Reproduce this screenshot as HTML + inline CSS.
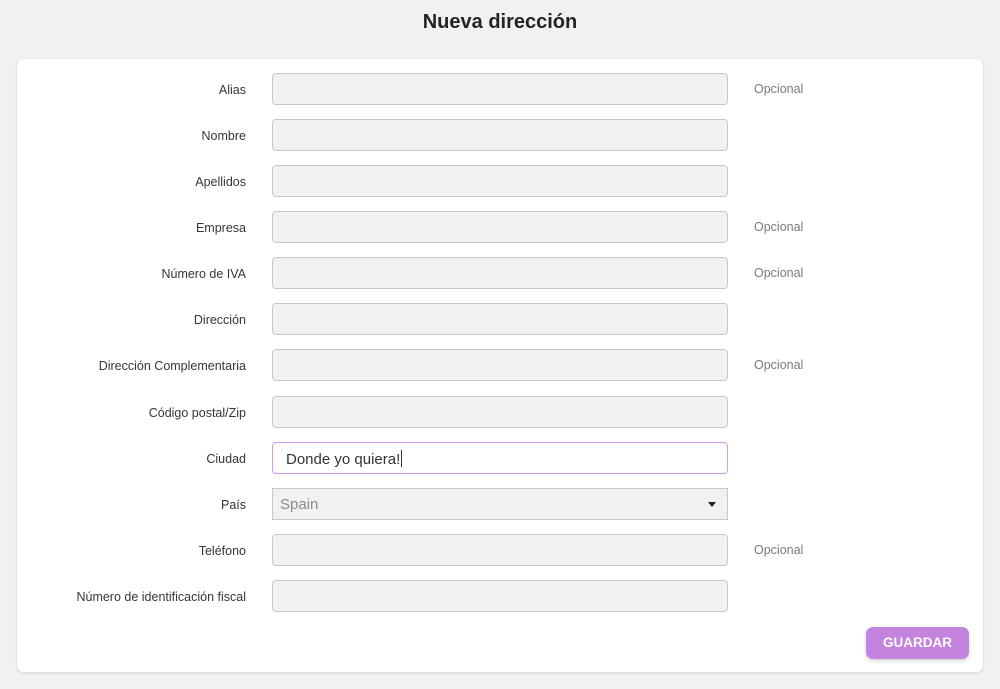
<!DOCTYPE html>
<html><head><meta charset="utf-8"><style>
*{box-sizing:border-box;margin:0;padding:0}
body{width:1000px;height:689px;background:#f1f1f1;font-family:"Liberation Sans","DejaVu Sans",sans-serif;color:#333;position:relative;overflow:hidden}
h1{position:absolute;top:11px;left:0;width:1000px;text-align:center;font-size:20px;font-weight:bold;color:#232323}
.card{position:absolute;left:17px;top:59px;width:966px;height:613px;background:#fff;border-radius:7px;box-shadow:0 1px 3px rgba(0,0,0,.12)}
.row{position:absolute;left:0;width:966px;height:32px}
.lbl{position:absolute;right:737px;top:10px;font-size:12.5px;color:#363636;white-space:nowrap}
.inp{position:absolute;left:255px;top:0;width:456px;height:32px;background:#f1f1f1;border:1px solid #c8c8c8;border-radius:4px}
.opt{position:absolute;left:737px;top:9px;font-size:12.5px;color:#7a7a7a}
.focus{background:#fff;border-color:#cf9be8}
.focus span{position:absolute;left:13px;top:7px;font-size:15px;color:#333}
.focus b{display:inline-block;width:1px;height:17px;background:#333;vertical-align:-3px;margin-left:1px}
.sel{border-radius:0}
.sel span{position:absolute;left:7px;top:7px;font-size:15px;color:#8a8a8a}
.sel i{position:absolute;right:11px;top:13px;border:4px solid transparent;border-top:5px solid #222;border-bottom:0}
.btn{position:absolute;left:849px;top:568px;width:103px;height:32px;background:#c583e0;border-radius:7px;color:#fff;font-weight:bold;font-size:13.5px;text-align:center;line-height:32px;box-shadow:0 2px 4px rgba(0,0,0,.18)}
</style></head><body>
<h1>Nueva dirección</h1>
<div class="card">
<div class="row" style="top:14px"><div class="lbl">Alias</div><div class="inp"></div><div class="opt">Opcional</div></div>
<div class="row" style="top:60px"><div class="lbl">Nombre</div><div class="inp"></div></div>
<div class="row" style="top:106px"><div class="lbl">Apellidos</div><div class="inp"></div></div>
<div class="row" style="top:152px"><div class="lbl">Empresa</div><div class="inp"></div><div class="opt">Opcional</div></div>
<div class="row" style="top:198px"><div class="lbl">Número de IVA</div><div class="inp"></div><div class="opt">Opcional</div></div>
<div class="row" style="top:244px"><div class="lbl">Dirección</div><div class="inp"></div></div>
<div class="row" style="top:290px"><div class="lbl">Dirección Complementaria</div><div class="inp"></div><div class="opt">Opcional</div></div>
<div class="row" style="top:337px"><div class="lbl">Código postal/Zip</div><div class="inp"></div></div>
<div class="row" style="top:383px"><div class="lbl">Ciudad</div><div class="inp focus"><span>Donde yo quiera!<b></b></span></div></div>
<div class="row" style="top:429px"><div class="lbl">País</div><div class="inp sel"><span>Spain</span><i></i></div></div>
<div class="row" style="top:475px"><div class="lbl">Teléfono</div><div class="inp"></div><div class="opt">Opcional</div></div>
<div class="row" style="top:521px"><div class="lbl">Número de identificación fiscal</div><div class="inp"></div></div>
<div class="btn">GUARDAR</div>
</div>
</body></html>
